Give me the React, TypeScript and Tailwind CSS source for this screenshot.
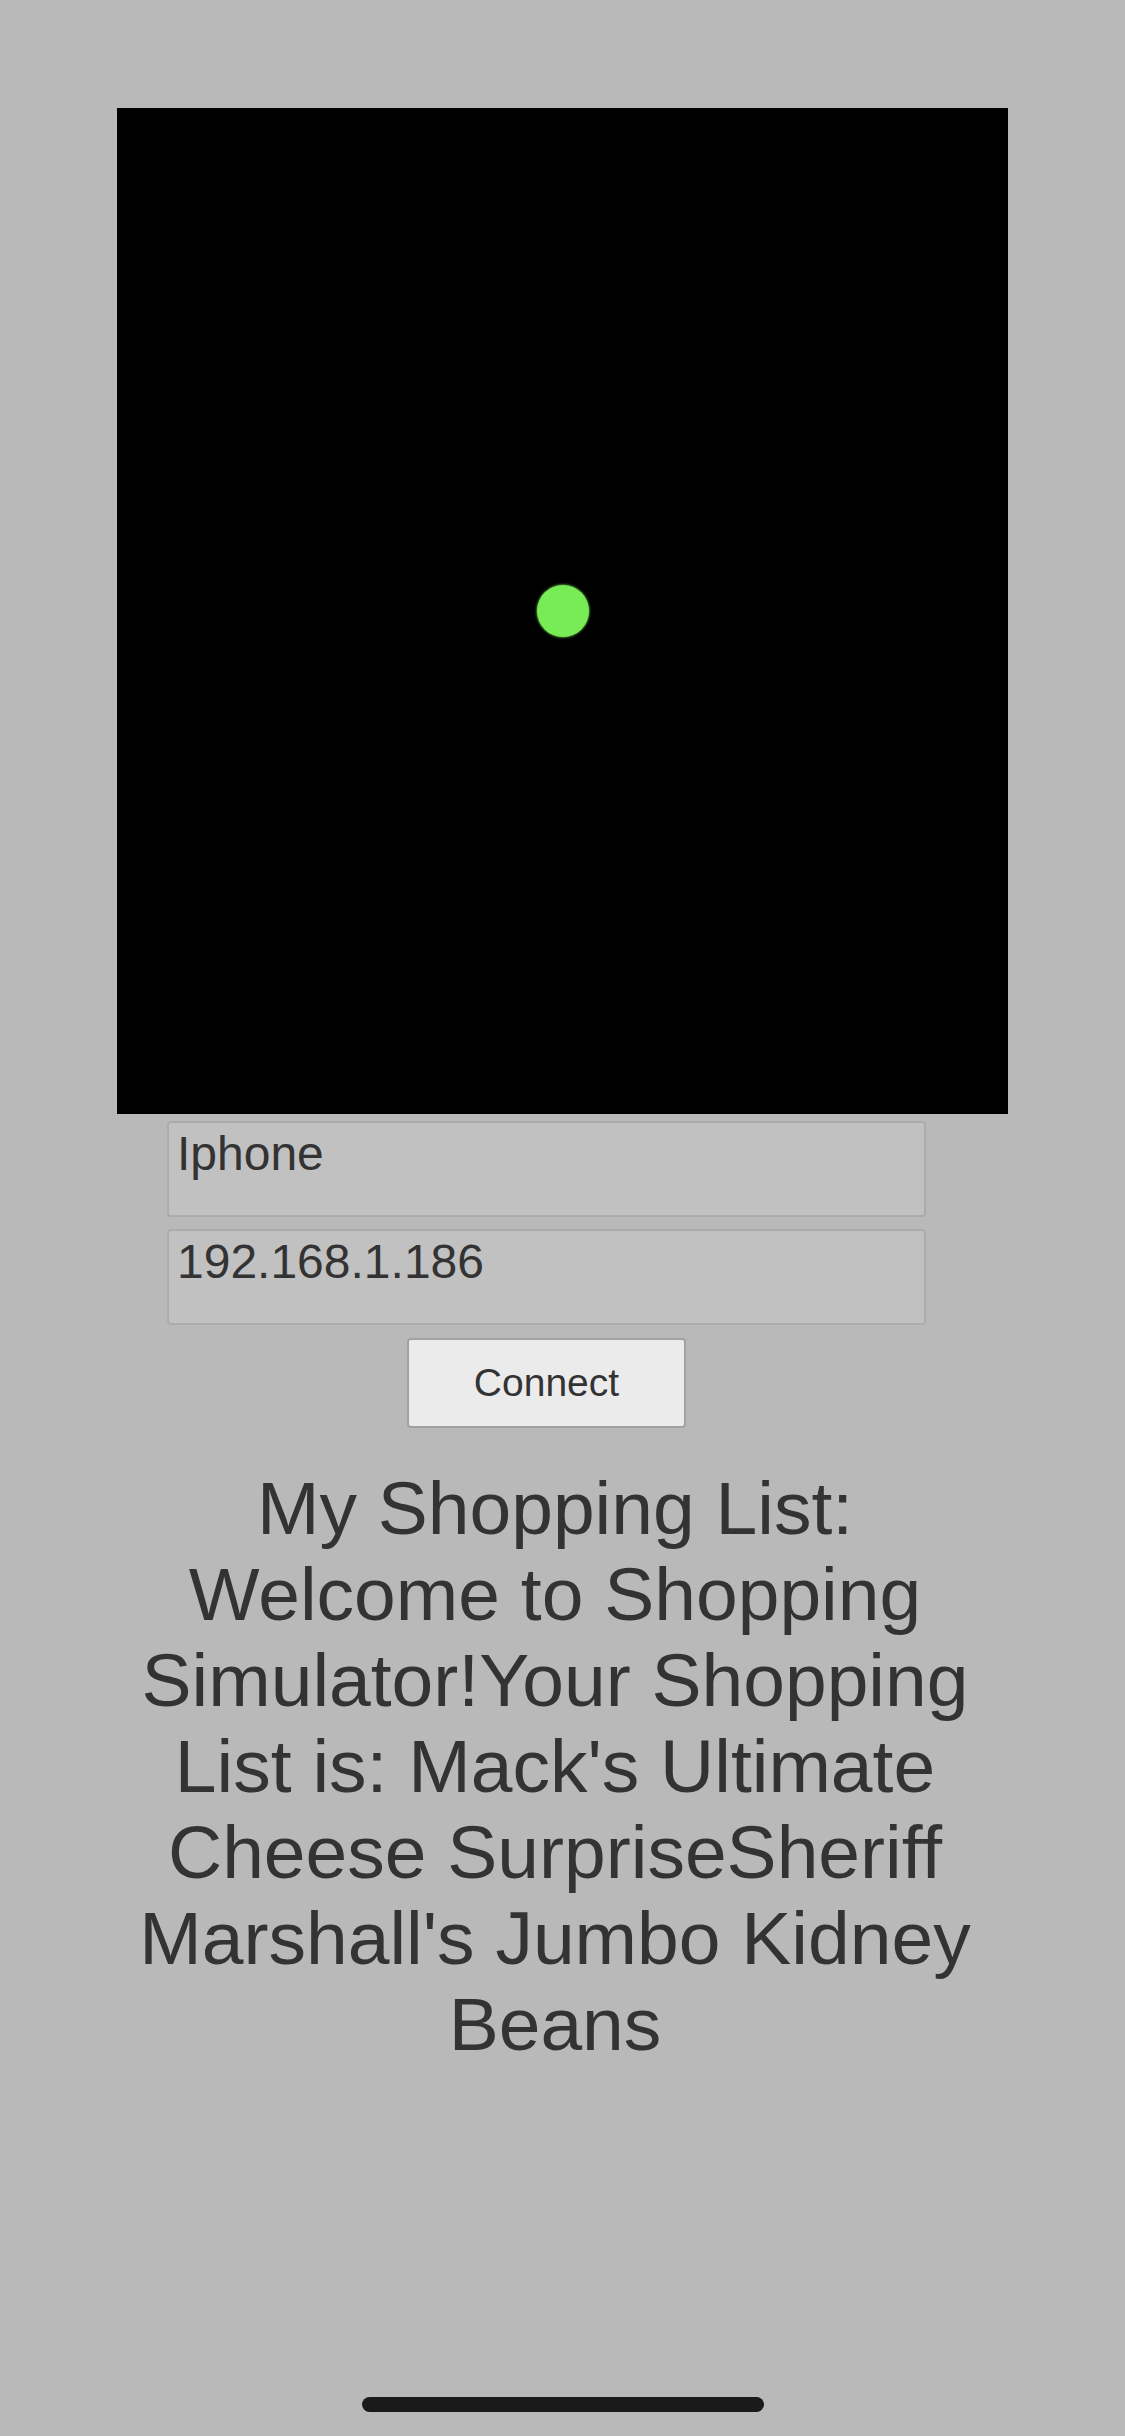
const listText =
  "My Shopping List: Welcome to Shopping Simulator!Your Shopping List is: Mack's Ultimate Cheese SurpriseSheriff Marshall's Jumbo Kidney Beans";

const Field = ({ value }: { value: string }) => (
  <div className="ml-[167px] w-[759px] h-[96px] rounded-[4px] border-2 border-[#acacac] bg-[#c1c1c1] pl-[8px] pt-[3px] text-[48px] leading-[1.15] text-[#333333]">
    {value}
  </div>
);

export default function App() {
  return (
    <div
      className="relative flex h-[2436px] w-[1125px] flex-col bg-[#b9b9b9]"
      style={{ fontFamily: '"Liberation Sans", Arial, sans-serif' }}
    >
      {/* game view */}
      <div className="ml-[117px] mt-[108px] flex h-[1006px] w-[891px] items-center justify-center bg-black">
        <div className="h-[52px] w-[52px] rounded-full bg-[#77ec55] shadow-[0_0_2px_1px_#3f7a2c]" />
      </div>

      <div className="mt-[7px]">
        <Field value="Iphone" />
      </div>
      <div className="mt-[12px]">
        <Field value="192.168.1.186" />
      </div>

      <button className="ml-[407px] mt-[13px] flex h-[90px] w-[279px] items-center justify-center rounded-[4px] border-2 border-[#a2a2a2] bg-[#ebebeb] text-[39px] text-[#333333]">
        Connect
      </button>

      {/* shopping list */}
      <p className="ml-[120px] mt-[37px] w-[870px] text-center text-[75px] leading-[86px] text-[#333333]">
        {listText}
      </p>

      <div className="mb-[24px] ml-[362px] mt-auto h-[15px] w-[402px] rounded-full bg-[#1a1a1a]" />
    </div>
  );
}
